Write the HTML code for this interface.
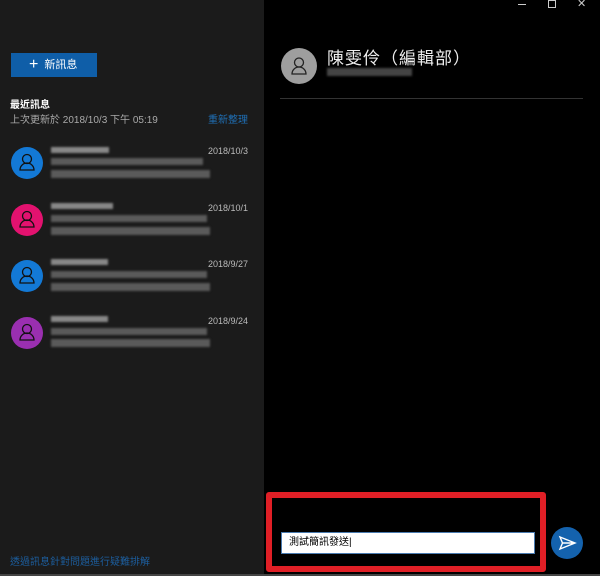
<html><head><style>
body{margin:0;width:600px;height:576px;background:#000;font-family:"Liberation Sans","Noto Sans CJK TC",sans-serif;position:relative;overflow:hidden}
.l{position:absolute;left:0;top:0;width:264px;height:576px;background:#1b1b1b}
.a{position:absolute}
.av{position:absolute;left:11px;width:32px;height:32px;border-radius:50%}
.bar{position:absolute;background:#5a5a5a;filter:blur(1px)}
.dt{position:absolute;left:178px;font-size:9px;color:#bbb;width:70px;text-align:right}
</style></head><body>
<div class="l"></div>
<div class="a" style="left:11px;top:53px;width:86px;height:24px;background:#0f5ea8;color:#fff;font-size:11px;line-height:24px"><span style="font-size:16px;margin:0 6px 0 18px;vertical-align:-1px">+</span>新訊息</div>
<div class="a" style="left:10px;top:96px;color:#fff;font-size:10px;font-weight:bold">最近訊息</div>
<div class="a" style="left:10px;top:111px;color:#aaa;font-size:10px">上次更新於 2018/10/3 下午 05:19</div>
<div class="a" style="left:208px;top:111px;color:#1f6fb5;font-size:10px">重新整理</div>

<div class="av" style="top:147px;background:#1379d6"></div>
<div class="av" style="top:204px;background:#e3126f"></div>
<div class="av" style="top:260px;background:#1379d6"></div>
<div class="av" style="top:317px;background:#9a2fb0"></div>
<svg class="a" style="left:0;top:0" width="60" height="360" fill="none" stroke="#111" stroke-width="1.3">
<g><circle cx="27" cy="159" r="4.5"/><path d="M20 170a7 7 0 0 1 14 0z"/></g>
<g><circle cx="27" cy="216" r="4.5"/><path d="M20 227a7 7 0 0 1 14 0z"/></g>
<g><circle cx="27" cy="272" r="4.5"/><path d="M20 283a7 7 0 0 1 14 0z"/></g>
<g><circle cx="27" cy="329" r="4.5"/><path d="M20 340a7 7 0 0 1 14 0z"/></g>
</svg>
<div class="bar" style="left:51px;top:147px;width:58px;height:6px;background:#888"></div>
<div class="bar" style="left:51px;top:158px;width:152px;height:7px"></div>
<div class="bar" style="left:51px;top:170px;width:159px;height:8px"></div>
<div class="dt" style="top:146px">2018/10/3</div>
<div class="bar" style="left:51px;top:203px;width:62px;height:6px;background:#888"></div>
<div class="bar" style="left:51px;top:215px;width:156px;height:7px"></div>
<div class="bar" style="left:51px;top:227px;width:159px;height:8px"></div>
<div class="dt" style="top:203px">2018/10/1</div>
<div class="bar" style="left:51px;top:259px;width:57px;height:6px;background:#888"></div>
<div class="bar" style="left:51px;top:271px;width:156px;height:7px"></div>
<div class="bar" style="left:51px;top:283px;width:159px;height:8px"></div>
<div class="dt" style="top:259px">2018/9/27</div>
<div class="bar" style="left:51px;top:316px;width:57px;height:6px;background:#888"></div>
<div class="bar" style="left:51px;top:328px;width:156px;height:7px"></div>
<div class="bar" style="left:51px;top:339px;width:159px;height:8px"></div>
<div class="dt" style="top:316px">2018/9/24</div>
<div class="a" style="left:10px;top:553px;color:#1c5d9c;font-size:10px">透過訊息針對問題進行疑難排解</div>

<div class="a" style="left:518px;top:4px;width:8px;height:1px;background:#ccc"></div>
<div class="a" style="left:548px;top:0px;width:6px;height:6px;border:1px solid #ccc"></div>
<div class="a" style="left:577px;top:-3px;color:#ccc;font-size:11px">✕</div>
<div class="a" style="left:281px;top:48px;width:36px;height:36px;border-radius:50%;background:#9e9e9e"></div>
<svg class="a" style="left:281px;top:48px" width="36" height="36" fill="none" stroke="#222" stroke-width="1.3"><circle cx="18" cy="14.5" r="4.5"/><path d="M11 26a7 7 0 0 1 14 0z"/></svg>
<div class="a" style="left:327px;top:44px;color:#eee;font-size:17px;letter-spacing:1px">陳雯伶（編輯部）</div>
<div class="bar" style="left:327px;top:68px;width:85px;height:8px;background:#444"></div>
<div class="a" style="left:280px;top:98px;width:303px;height:1px;background:#333"></div>

<div class="a" style="left:266px;top:492px;width:268px;height:68px;border:6px solid #e01f26;border-radius:3px"></div>
<div class="a" style="left:281px;top:532px;background:#fff;border:1px solid #4a7bb0;font-size:10px;line-height:20px;padding-left:7px;box-sizing:border-box;width:254px;height:22px">測試簡訊發送|</div>
<div class="a" style="left:551px;top:527px;width:32px;height:32px;border-radius:50%;background:#1462ad"></div>
<svg class="a" style="left:551px;top:527px" width="32" height="32" fill="none" stroke="#fff" stroke-width="1.4"><path d="M9 10l15 6-15 6 2.5-6z M11.5 16h12"/></svg>
<div class="a" style="left:0;top:574px;width:600px;height:2px;background:#444"></div>
</body></html>
